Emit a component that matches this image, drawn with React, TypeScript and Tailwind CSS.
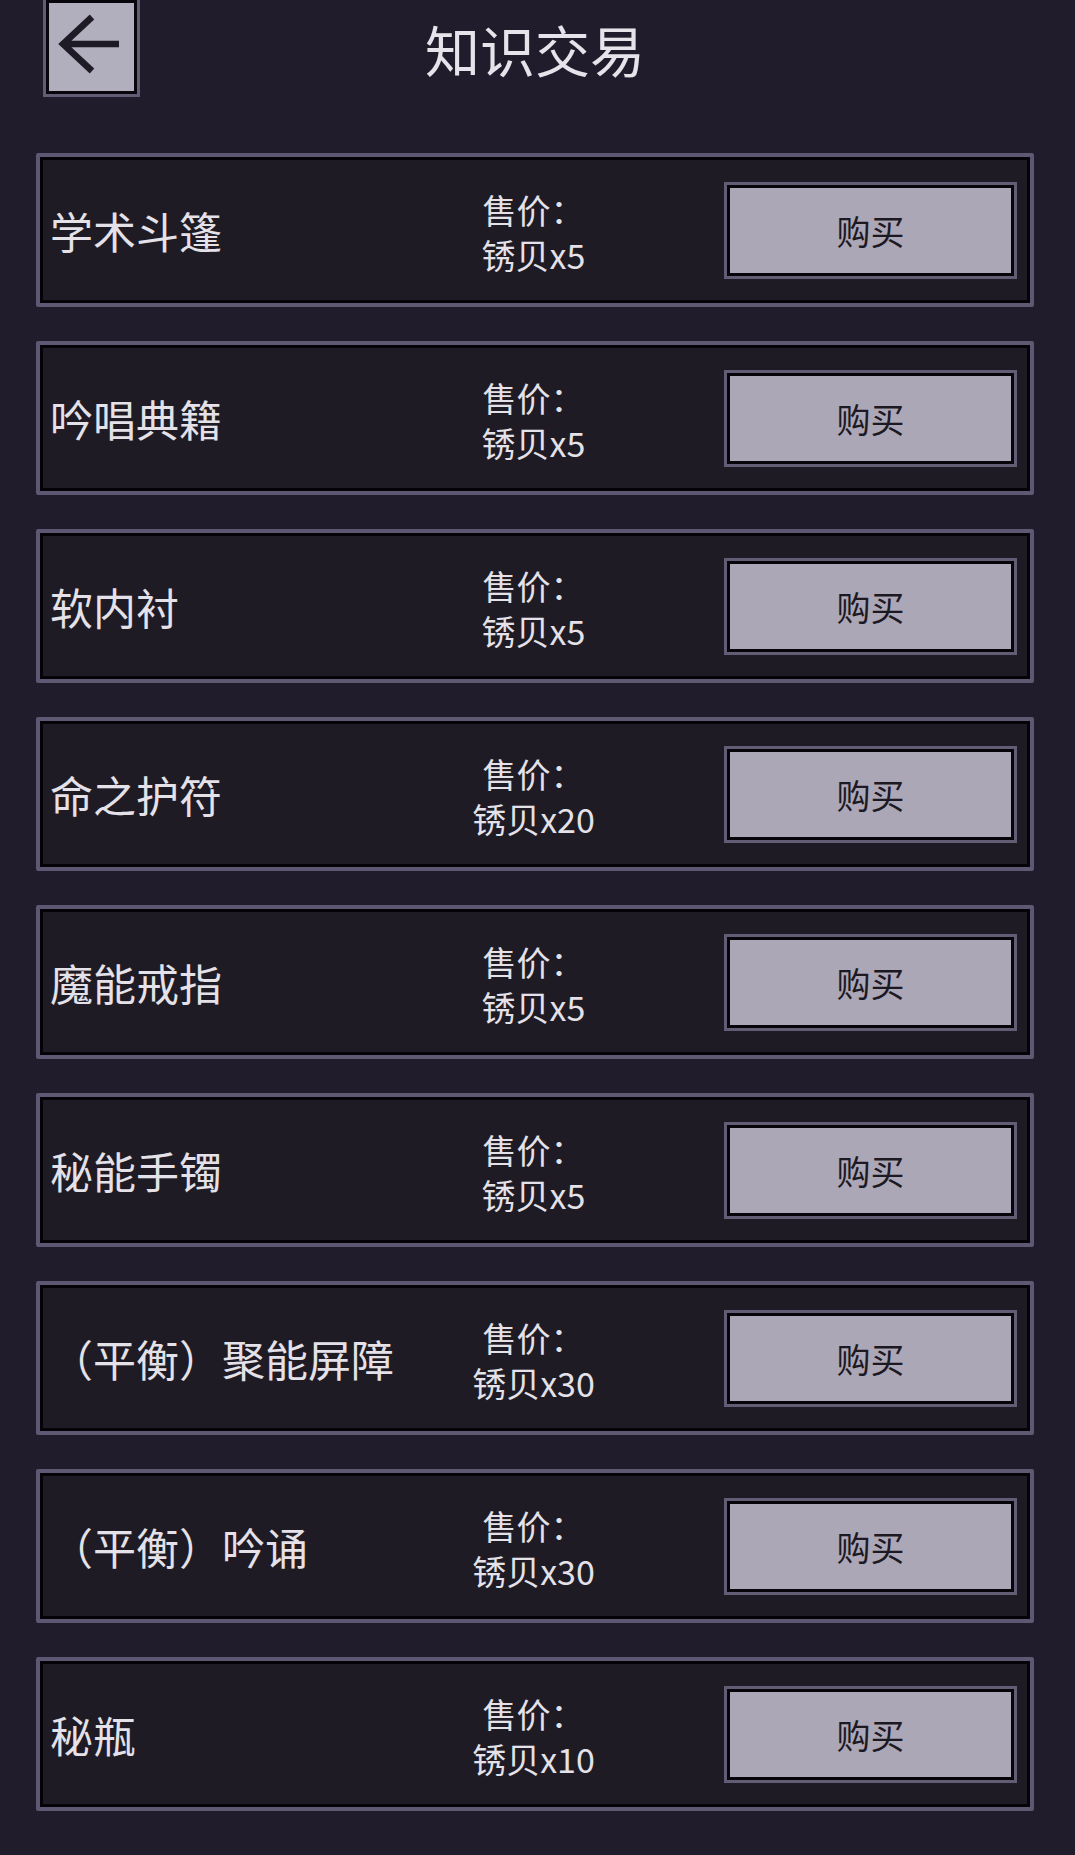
const items = [
  { name: "学术斗篷", price: 5 },
  { name: "吟唱典籍", price: 5 },
  { name: "软内衬", price: 5 },
  { name: "命之护符", price: 20 },
  { name: "魔能戒指", price: 5 },
  { name: "秘能手镯", price: 5 },
  { name: "（平衡）聚能屏障", price: 30 },
  { name: "（平衡）吟诵", price: 30 },
  { name: "秘瓶", price: 10 },
];

const font = { fontFamily: '"Noto Sans CJK SC", "Noto Sans", sans-serif' };

function BackButton() {
  return (
    <button
      className="w-[97px] h-[97px] border-[3px] border-t-0 border-[#625d74] bg-[#b1aebd] shadow-[inset_0_0_0_3px_#08060c] flex items-center justify-center"
    >
      <svg width="91" height="94" viewBox="0 0 91 94">
        <path
          d="M73 44 L17 44 M46 17 L17 44 L46 71"
          fill="none"
          stroke="#1f1b26"
          strokeWidth="6.5"
        />
      </svg>
    </button>
  );
}

function ItemRow({ name, price }: { name: string; price: number }) {
  return (
    <div className="h-[154px] w-[998px] border-4 border-[#5e5972] bg-[#1e1b24] shadow-[inset_0_0_0_3px_#050308] rounded-[2px] grid grid-cols-[1fr_auto_1fr] items-center pl-[10px] pr-[13px]">
      <div className="text-[43px] leading-none text-[#e4e1e9] whitespace-nowrap">{name}</div>
      <div className="text-center text-[34px] leading-[45px] text-[#e4e1e9] pt-[3px]">
        <div>售价：</div>
        <div>锈贝x{price}</div>
      </div>
      <div className="flex justify-end">
        <button className="w-[293px] h-[97px] border-[3px] border-[#625d74] bg-[#aba7b7] shadow-[inset_0_0_0_3px_#07050a] text-[34px] text-[#1d1923] flex items-center justify-center">
          购买
        </button>
      </div>
    </div>
  );
}

export default function App() {
  return (
    <div className="w-[1075px] min-h-[1855px] bg-[#211c2b]" style={font}>
      <div className="h-[153px] grid grid-cols-[1fr_auto_1fr] items-start pl-[43px]">
        <div>
          <BackButton />
        </div>
        <div className="h-[97px] flex items-center text-[55px] leading-none text-[#e6e3ea] pr-[48px]">
          知识交易
        </div>
        <div />
      </div>
      <div className="flex flex-col gap-[34px] pl-[36px]">
        {items.map((it) => (
          <ItemRow key={it.name} name={it.name} price={it.price} />
        ))}
      </div>
    </div>
  );
}
